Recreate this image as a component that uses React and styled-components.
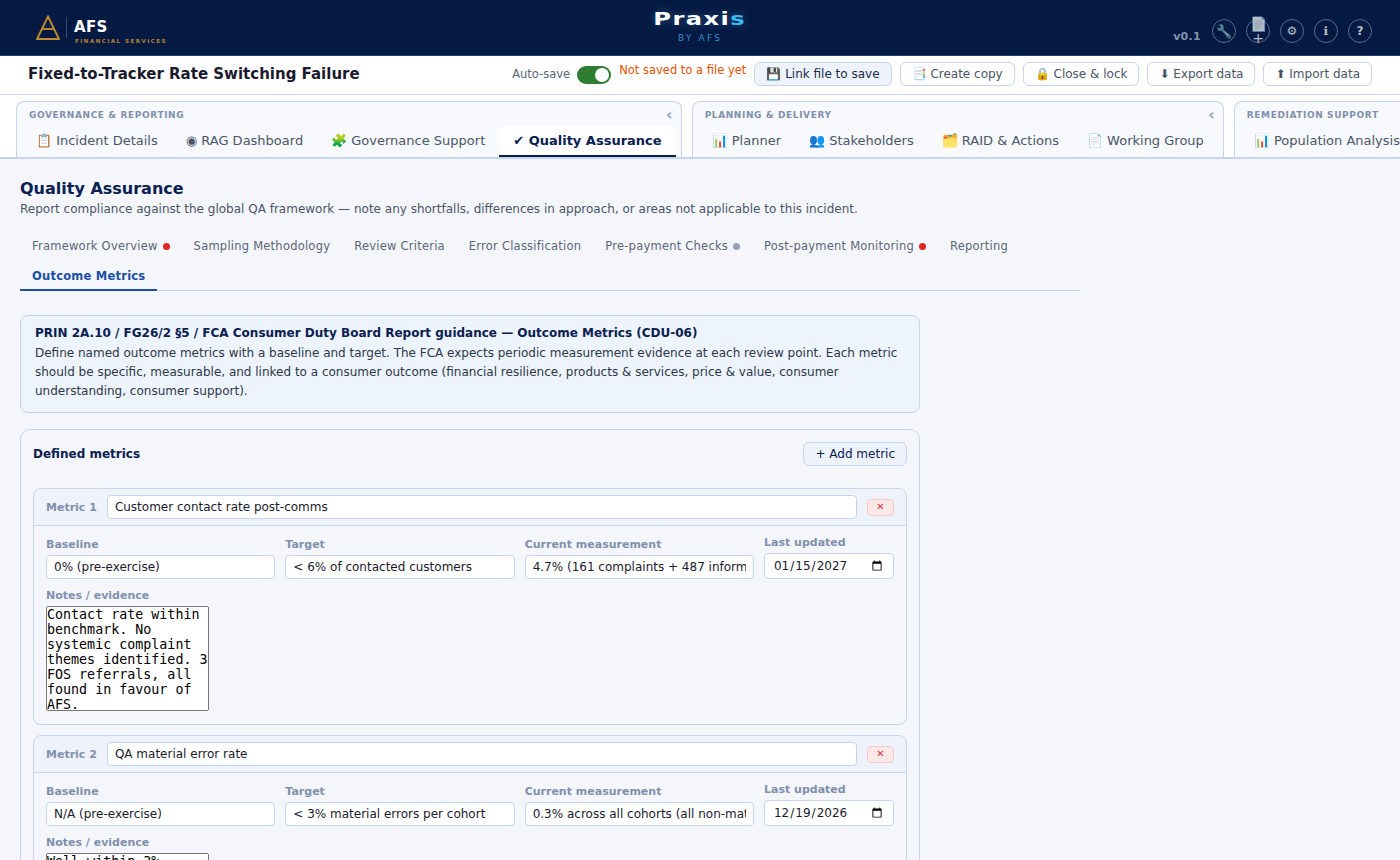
import React from "react";
import styled, {createGlobalStyle} from "styled-components";

const GlobalStyle = createGlobalStyle`
  html, body {
    margin: 0;
    padding: 0;
    height: 100%;
    overflow: hidden;
    background: #f4f6fb;
  }
  body, input, button {
    font-family: "DejaVu Sans", sans-serif;
  }
  * {
    box-sizing: border-box;
  }
`;

const Page = styled.div`
  height: 860px;
  overflow: hidden;
  display: flex;
  flex-direction: column;
`;

const Header = styled.header`
  flex: none;
  height: 56px;
  display: grid;
  grid-template-columns: 1fr auto 1fr;
  background: #041a42;
  border-bottom: 1px solid #1f3f6e;
  padding: 0 28px;
`;

const Brand = styled.div`
  display: flex;
  align-items: flex-start;
  padding: 15px 0 0 8px;
`;

const BrandDivider = styled.div`
  width: 1px;
  height: 21px;
  margin: 2px 7px 0 6px;
  background: rgba(255, 255, 255, 0.2);
`;

const BrandText = styled.div`
  display: flex;
  flex-direction: column;
`;

const BrandName = styled.span`
  font-size: 15px;
  line-height: 18px;
  margin-top: 3px;
  font-weight: 700;
  color: #fff;
  letter-spacing: 0.3px;
`;

const BrandSub = styled.span`
  font-size: 5.5px;
  line-height: 8px;
  margin-top: 1px;
  font-weight: 700;
  color: #b8862e;
  letter-spacing: 1.5px;
  margin-left: 1px;
  white-space: nowrap;
`;

const Product = styled.div`
  display: flex;
  flex-direction: column;
  align-items: center;
  padding-top: 9px;
`;

const ProductName = styled.div`
  font-size: 17px;
  line-height: 20px;
  font-weight: 700;
  color: #fff;
  letter-spacing: 1px;
  transform: scaleX(1.42);
  text-shadow: 0 0 8px rgba(120, 190, 255, 0.35);

  span {
    color: #38bdf0;
  }
`;

const ProductSub = styled.div`
  font-size: 9px;
  line-height: 11px;
  margin-top: 4px;
  color: #2f8fc8;
  letter-spacing: 2.2px;
`;

const HeaderTools = styled.div`
  display: flex;
  justify-content: flex-end;
  align-items: flex-start;
  gap: 10px;
  padding-top: 19px;
`;

const Version = styled.span`
  font-size: 11px;
  line-height: 14px;
  margin-top: 11px;
  margin-right: 1px;
  font-weight: 700;
  color: #8293ad;
  letter-spacing: 0.3px;
`;

const RoundButton = styled.button`
  width: 24px;
  height: 24px;
  padding: 0;
  border-radius: 50%;
  border: 1px solid rgba(255, 255, 255, 0.5);
  background: transparent;
  color: #fff;
  opacity: 0.7;
  font-size: ${({$size}) => $size || 12}px;
  font-weight: 700;
  line-height: 1;
  display: flex;
  align-items: center;
  justify-content: center;
  text-align: center;
`;

const DocIcon = styled.span`
  display: block;
  width: 22px;
  font-size: 14px;
  line-height: 14px;
  font-weight: 400;
`;

const TitleBar = styled.div`
  flex: none;
  height: 39px;
  display: flex;
  align-items: center;
  background: #fff;
  border-bottom: 1px solid #c5d5ee;
  padding: 0 28px 3px;
`;

const CaseTitle = styled.h1`
  margin: 0;
  flex: 1;
  font-size: 15px;
  font-weight: 700;
  color: #1a1a2e;
`;

const SaveLabel = styled.span`
  font-size: 11.5px;
  color: #5a6678;
  margin-right: 7px;
`;

const Toggle = styled.span`
  position: relative;
  width: 34px;
  height: 18px;
  top: 1px;
  border-radius: 9px;
  background: #2e7d32;
  margin-right: 8px;

  &::after {
    content: "";
    position: absolute;
    right: 2px;
    top: 2px;
    width: 14px;
    height: 14px;
    border-radius: 50%;
    background: #fff;
  }
`;

const SaveStatus = styled.span`
  font-size: 11.5px;
  line-height: 14px;
  margin: 0 8px 8px 0;
  color: #e65100;
`;

const Actions = styled.div`
  display: flex;
  gap: 8px;
`;

const ActionButton = styled.button`
  height: 24px;
  padding: 0 11px;
  font-size: 12px;
  white-space: nowrap;
  border-radius: 6px;
  border: 1px solid #c5d5ee;
  background: ${({$primary}) => ($primary ? "#eef2fa" : "#fff")};
  color: ${({$primary}) => ($primary ? "#1a2b4a" : "#4a5568")};
`;

const TabZone = styled.nav`
  flex: none;
  height: 64px;
  display: flex;
  gap: 10px;
  overflow: hidden;
  background: #fff;
  border-bottom: 2px solid #c5d5ee;
  padding: 6px 0 0 16px;
`;

const TabGroup = styled.section`
  position: relative;
  flex: none;
  display: flex;
  flex-direction: column;
  background: #f7f9fd;
  border: 1px solid #c5d5ee;
  border-bottom: none;
  border-radius: 8px 8px 0 0;
  padding: 0 5px;
`;

const GroupLabel = styled.div`
  font-size: 9px;
  line-height: 12px;
  font-weight: 700;
  letter-spacing: 0.6px;
  text-transform: uppercase;
  color: #8090ac;
  padding: 7px 7px 0;
`;

const Collapse = styled.span`
  position: absolute;
  top: 4px;
  right: 8px;
  font-size: 16px;
  line-height: 18px;
  font-weight: 700;
  color: #9aa8bf;
`;

const GroupTabs = styled.div`
  display: flex;
  margin-top: 5px;
`;

const TopTab = styled.div`
  height: 31px;
  padding: 0 14px;
  display: flex;
  align-items: center;
  white-space: nowrap;
  font-size: 13px;
  font-weight: ${({$active}) => ($active ? 700 : 400)};
  color: ${({$active}) => ($active ? "#0a2050" : "#4a5568")};
  background: ${({$active}) => ($active ? "#fff" : "transparent")};
  border-radius: 6px 6px 0 0;
  border-bottom: 2px solid ${({$active}) => ($active ? "#0a1f4a" : "transparent")};
`;

const Content = styled.main`
  flex: 1;
  min-height: 0;
  padding: 20px 20px 0;
`;

const PageTitle = styled.h2`
  margin: 0;
  font-size: 16px;
  line-height: 20px;
  font-weight: 700;
  color: #0a2050;
`;

const PageIntro = styled.p`
  margin: 1px 0 0;
  font-size: 12px;
  line-height: 18px;
  color: #4a5568;
`;

const SubTabs = styled.div`
  max-width: 1060px;
  display: flex;
  flex-wrap: wrap;
  margin-top: 13px;
  border-bottom: 1px solid #c5d5ee;
`;

const SubTab = styled.button`
  height: 30px;
  padding: 2px 12px 0;
  display: flex;
  align-items: center;
  gap: 5px;
  font-size: 11.5px;
  letter-spacing: 0.02em;
  white-space: nowrap;
  background: transparent;
  border: none;
  font-weight: ${({$active}) => ($active ? 700 : 400)};
  color: ${({$active}) => ($active ? "#1a4fa8" : "#5a6678")};
  border-bottom: 2px solid ${({$active}) => ($active ? "#1a4fa8" : "transparent")};
  margin-bottom: ${({$active}) => ($active ? "-1px" : 0)};
`;

const Dot = styled.span`
  width: 7px;
  height: 7px;
  border-radius: 50%;
  background: ${({$tone}) => ($tone === "grey" ? "#94a3b8" : "#e02424")};
`;

const Guidance = styled.div`
  max-width: 900px;
  margin-top: 24px;
  padding: 8px 14px 11px;
  background: #edf4fd;
  border: 1px solid #c5d5ee;
  border-radius: 8px;
  font-size: 12px;
  line-height: 19px;
  color: #2d3748;

  strong {
    display: block;
    margin-bottom: 1px;
    color: #0a2050;
  }
`;

const MetricsPanel = styled.section`
  max-width: 900px;
  margin-top: 16px;
  padding: 12px;
  border: 1px solid #c5d5ee;
  border-radius: 10px;
`;

const PanelHead = styled.div`
  display: flex;
  align-items: center;
  justify-content: space-between;
  margin-bottom: 22px;
`;

const PanelTitle = styled.h3`
  margin: 0;
  font-size: 12px;
  font-weight: 700;
  color: #0a2050;
`;

const AddButton = styled.button`
  height: 24px;
  padding: 0 11px;
  font-size: 12px;
  border-radius: 6px;
  border: 1px solid #c5d5ee;
  background: #eef2fa;
  color: #0a2050;
`;

const MetricCard = styled.article`
  border: 1px solid #c5d5ee;
  border-radius: 8px;
  margin-bottom: 10px;
  overflow: hidden;
`;

const MetricHead = styled.div`
  height: 37px;
  display: flex;
  align-items: center;
  gap: 10px;
  padding: 0 12px;
  background: #eef2fa;
  border-bottom: 1px solid #c5d5ee;
`;

const MetricNumber = styled.span`
  font-size: 11px;
  font-weight: 700;
  color: #8090ac;
  white-space: nowrap;
`;

const TextInput = styled.input`
  width: 100%;
  height: 24px;
  min-width: 0;
  padding: 0 7px;
  font-size: 12px;
  color: #1a1a2e;
  background: #fff;
  border: 1px solid #c5d5ee;
  border-radius: 4px;
  outline: none;
`;

const DateInput = styled(TextInput)`
  height: 26px;
  padding: 0 8px;
`;

const RemoveButton = styled.button`
  flex: none;
  width: 27px;
  height: 17px;
  padding: 0;
  font-size: 10px;
  line-height: 1;
  color: #d9333f;
  background: #fde8e8;
  border: 1px solid #f8c9c9;
  border-radius: 4px;
`;

const MetricBody = styled.div`
  padding: 10px 12px 13px;
`;

const FieldGrid = styled.div`
  display: grid;
  grid-template-columns: 1fr 1fr 1fr 130px;
  gap: 10px;
  align-items: end;
`;

const Field = styled.label`
  display: flex;
  flex-direction: column;
  min-width: 0;
`;

const FieldLabel = styled.span`
  font-size: 11px;
  line-height: 14px;
  margin-bottom: 3px;
  font-weight: 700;
  color: #8090ac;
  white-space: nowrap;
`;

const NotesField = styled.div`
  margin-top: 10px;
`;

const NotesLabel = styled(FieldLabel)`
  display: block;
  margin-bottom: 3px;
`;

const NotesArea = styled.textarea`
  display: block;
  height: 105px;
  padding: 0;
  resize: none;
  overflow: hidden;
`;

const metrics = [
    {
        name: "Customer contact rate post-comms",
        baseline: "0% (pre-exercise)",
        target: "< 6% of contacted customers",
        current: "4.7% (161 complaints + 487 informal contacts)",
        updated: "2027-01-15",
        notes: "Contact rate within benchmark. No systemic complaint themes identified. 3 FOS referrals, all found in favour of AFS.",
    },
    {
        name: "QA material error rate",
        baseline: "N/A (pre-exercise)",
        target: "< 3% material errors per cohort",
        current: "0.3% across all cohorts (all non-material)",
        updated: "2026-12-19",
        notes: "Well within 3% tolerance across all cohorts.",
    },
];

const Metric = ({index, metric}) => (
    <MetricCard>
        <MetricHead>
            <MetricNumber>Metric {index}</MetricNumber>
            <TextInput defaultValue={metric.name}/>
            <RemoveButton>✕</RemoveButton>
        </MetricHead>
        <MetricBody>
            <FieldGrid>
                <Field>
                    <FieldLabel>Baseline</FieldLabel>
                    <TextInput defaultValue={metric.baseline}/>
                </Field>
                <Field>
                    <FieldLabel>Target</FieldLabel>
                    <TextInput defaultValue={metric.target}/>
                </Field>
                <Field>
                    <FieldLabel>Current measurement</FieldLabel>
                    <TextInput defaultValue={metric.current}/>
                </Field>
                <Field>
                    <FieldLabel>Last updated</FieldLabel>
                    <DateInput type="date" defaultValue={metric.updated}/>
                </Field>
            </FieldGrid>
            <NotesField>
                <NotesLabel>Notes / evidence</NotesLabel>
                <NotesArea defaultValue={metric.notes}/>
            </NotesField>
        </MetricBody>
    </MetricCard>
);

const App = () => (
    <Page>
        <GlobalStyle/>
        <Header>
            <Brand>
                <svg width="24" height="25" viewBox="0 0 24 25" fill="none" stroke="#c08a2e" strokeWidth="1.9">
                    <path d="M12 1.5 L23 24 H1 Z"/>
                    <path d="M6 14 H18"/>
                </svg>
                <BrandDivider/>
                <BrandText>
                    <BrandName>AFS</BrandName>
                    <BrandSub>FINANCIAL SERVICES</BrandSub>
                </BrandText>
            </Brand>
            <Product>
                <ProductName>Praxi<span>s</span></ProductName>
                <ProductSub>BY AFS</ProductSub>
            </Product>
            <HeaderTools>
                <Version>v0.1</Version>
                <RoundButton $size={13}>🔧</RoundButton>
                <RoundButton><DocIcon>📄+</DocIcon></RoundButton>
                <RoundButton>⚙</RoundButton>
                <RoundButton>ℹ</RoundButton>
                <RoundButton>?</RoundButton>
            </HeaderTools>
        </Header>
        <TitleBar>
            <CaseTitle>Fixed-to-Tracker Rate Switching Failure</CaseTitle>
            <SaveLabel>Auto-save</SaveLabel>
            <Toggle/>
            <SaveStatus>Not saved to a file yet</SaveStatus>
            <Actions>
                <ActionButton $primary>💾 Link file to save</ActionButton>
                <ActionButton>📑 Create copy</ActionButton>
                <ActionButton>🔒 Close &amp; lock</ActionButton>
                <ActionButton>⬇ Export data</ActionButton>
                <ActionButton>⬆ Import data</ActionButton>
            </Actions>
        </TitleBar>
        <TabZone>
            <TabGroup>
                <GroupLabel>Governance &amp; Reporting</GroupLabel>
                <Collapse>‹</Collapse>
                <GroupTabs>
                    <TopTab>📋 Incident Details</TopTab>
                    <TopTab>◉ RAG Dashboard</TopTab>
                    <TopTab>🧩 Governance Support</TopTab>
                    <TopTab $active>✔ Quality Assurance</TopTab>
                </GroupTabs>
            </TabGroup>
            <TabGroup>
                <GroupLabel>Planning &amp; Delivery</GroupLabel>
                <Collapse>‹</Collapse>
                <GroupTabs>
                    <TopTab>📊 Planner</TopTab>
                    <TopTab>👥 Stakeholders</TopTab>
                    <TopTab>🗂️ RAID &amp; Actions</TopTab>
                    <TopTab>📄 Working Group</TopTab>
                </GroupTabs>
            </TabGroup>
            <TabGroup>
                <GroupLabel>Remediation Support</GroupLabel>
                <GroupTabs>
                    <TopTab>📊 Population Analysis</TopTab>
                </GroupTabs>
            </TabGroup>
        </TabZone>
        <Content>
            <PageTitle>Quality Assurance</PageTitle>
            <PageIntro>Report compliance against the global QA framework — note any shortfalls, differences in approach, or areas not applicable to this incident.</PageIntro>
            <SubTabs>
                <SubTab>Framework Overview <Dot/></SubTab>
                <SubTab>Sampling Methodology</SubTab>
                <SubTab>Review Criteria</SubTab>
                <SubTab>Error Classification</SubTab>
                <SubTab>Pre-payment Checks <Dot $tone="grey"/></SubTab>
                <SubTab>Post-payment Monitoring <Dot/></SubTab>
                <SubTab>Reporting</SubTab>
                <SubTab $active>Outcome Metrics</SubTab>
            </SubTabs>
            <Guidance>
                <strong>PRIN 2A.10 / FG26/2 §5 / FCA Consumer Duty Board Report guidance — Outcome Metrics (CDU-06)</strong>
                Define named outcome metrics with a baseline and target. The FCA expects periodic measurement evidence at each review point. Each metric should be specific, measurable, and linked to a consumer outcome (financial resilience, products &amp; services, price &amp; value, consumer understanding, consumer support).
            </Guidance>
            <MetricsPanel>
                <PanelHead>
                    <PanelTitle>Defined metrics</PanelTitle>
                    <AddButton>+ Add metric</AddButton>
                </PanelHead>
                {metrics.map((metric, i) => (
                    <Metric key={metric.name} index={i + 1} metric={metric}/>
                ))}
            </MetricsPanel>
        </Content>
    </Page>
);

export default App;
